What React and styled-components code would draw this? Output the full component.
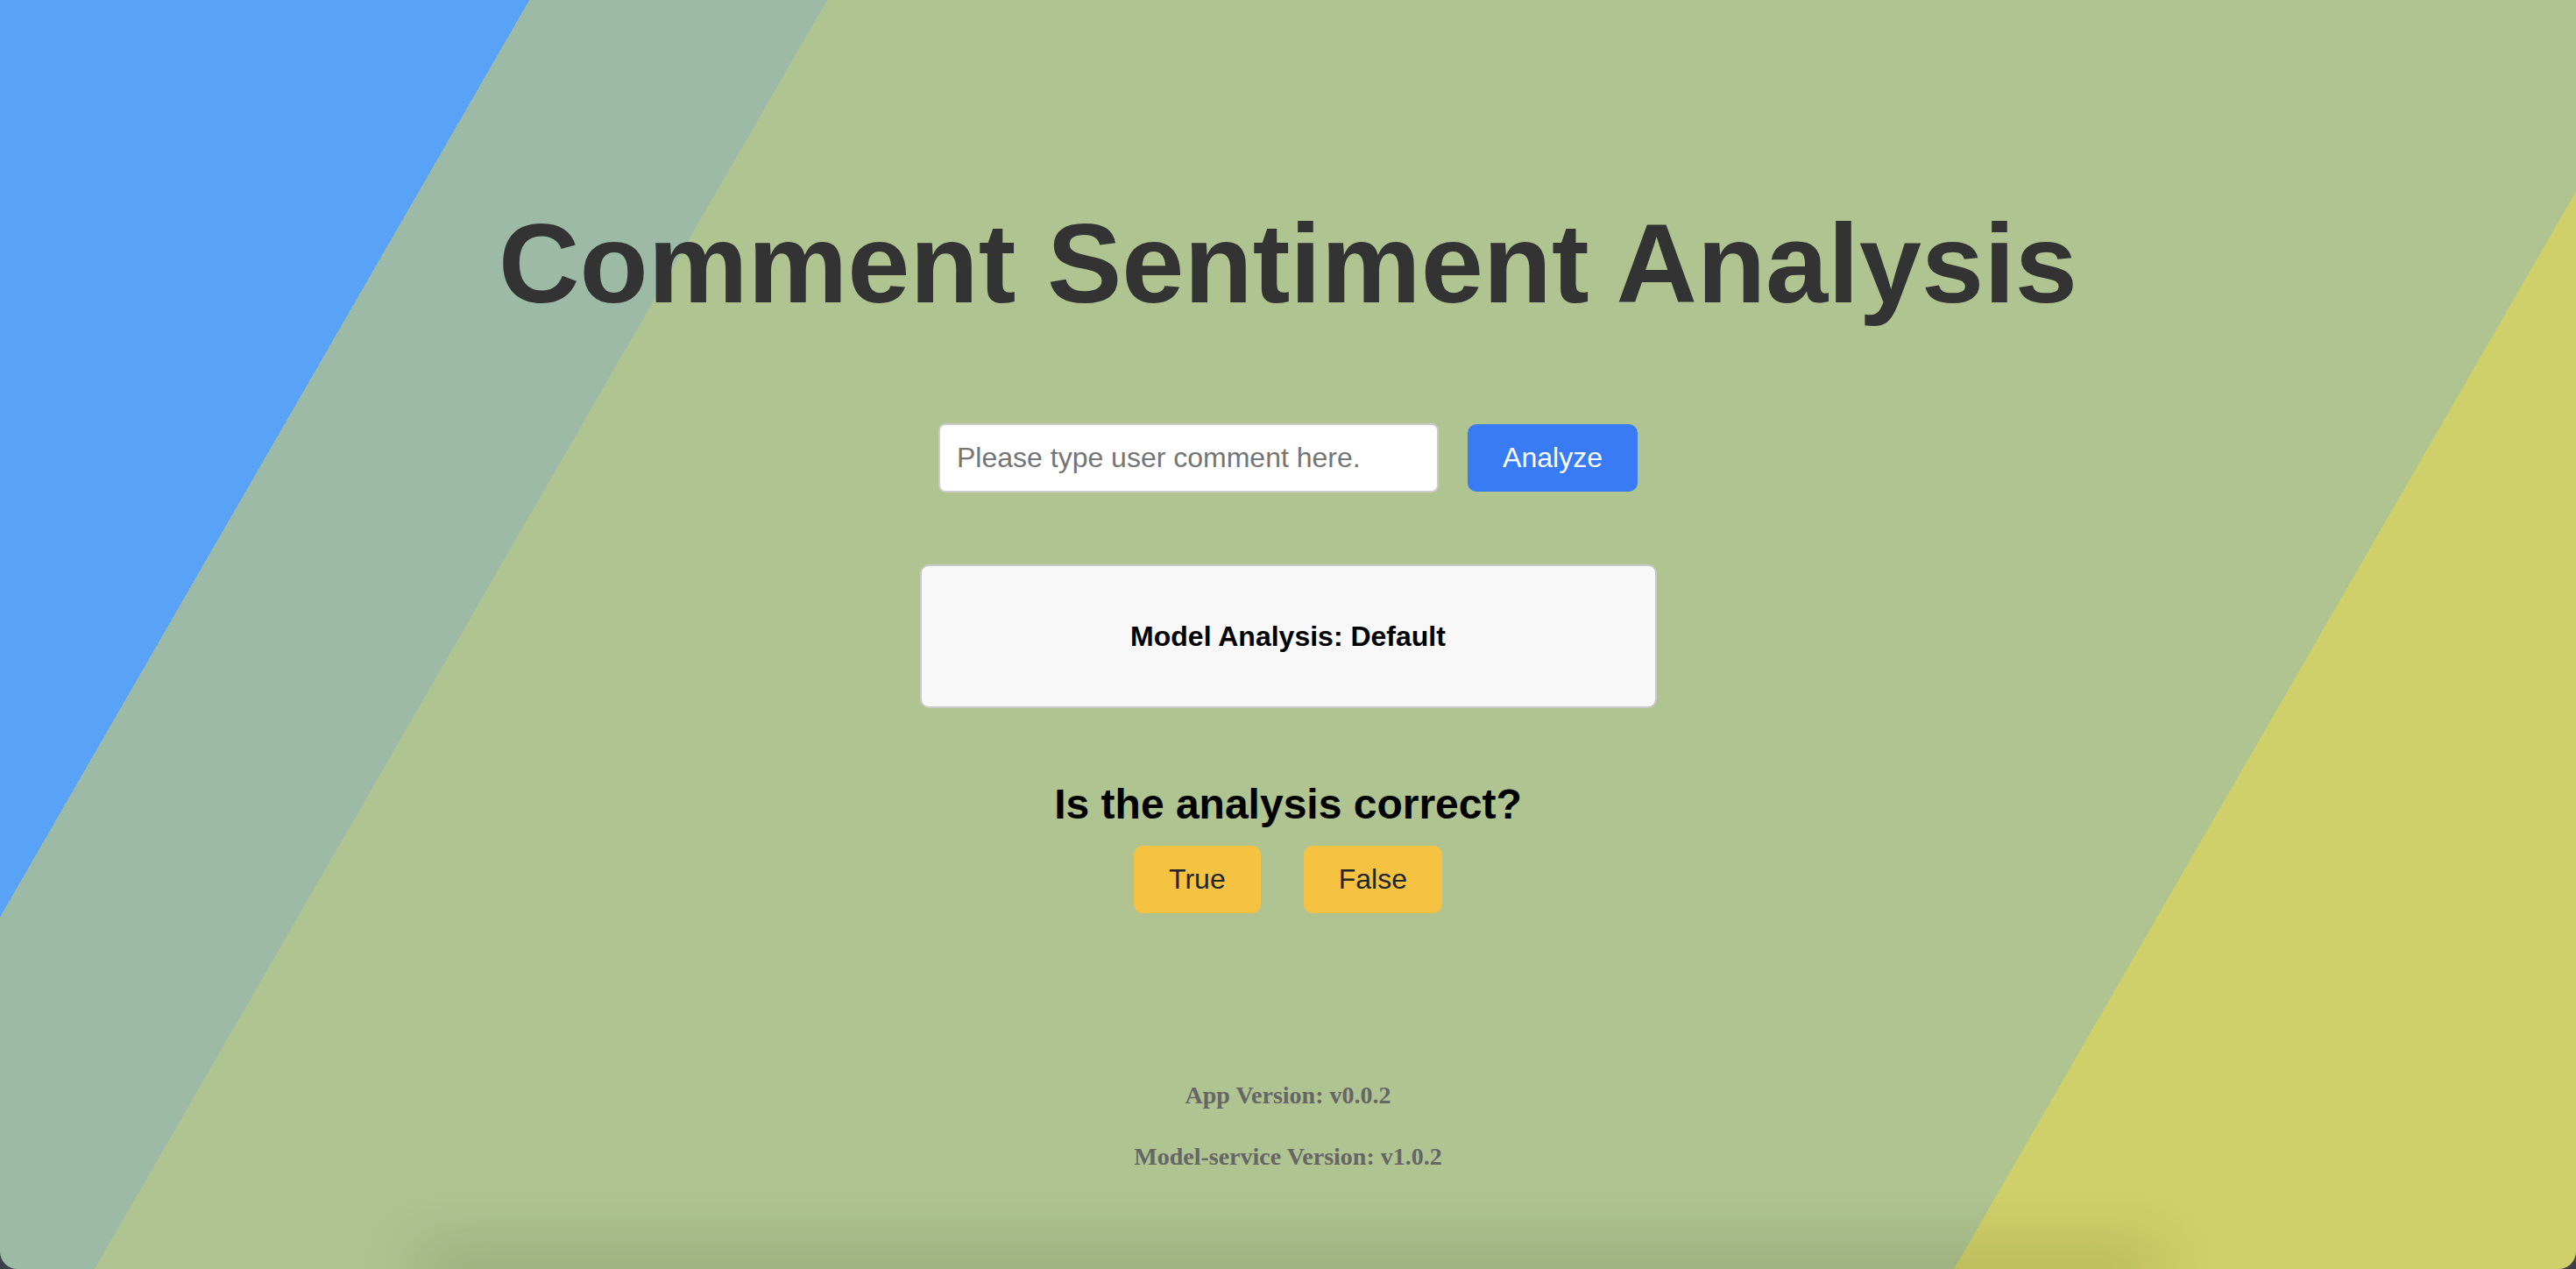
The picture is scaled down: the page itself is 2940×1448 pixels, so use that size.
import React, { useState } from "react";
import styled, { createGlobalStyle } from "styled-components";

const Global = createGlobalStyle`
  html, body {
    margin: 0;
    padding: 0;
    background: #3b4049;
  }
`;

const Window = styled.div`
  min-height: 100vh;
  box-sizing: border-box;
  display: flex;
  flex-direction: column;
  align-items: center;
  overflow: hidden;
  border-radius: 0 0 20px 20px;
  font-family: "Liberation Sans", Arial, sans-serif;
  background: linear-gradient(
    120deg,
    #58a2f7 0 16%,
    #9dbaa6 16% 25%,
    #afc491 25% 81.2%,
    #d0d06a 81.2% 100%
  );
`;

const Titulo = styled.h1`
  margin: 229px 0 0;
  font-size: 128px;
  line-height: 143px;
  font-weight: bold;
  color: #333;
`;

const Linha = styled.div`
  display: flex;
  align-items: center;
  gap: ${(p) => p.gap || 0}px;
  margin-top: ${(p) => p.top || 0}px;
`;

const Campo = styled.input`
  width: 571px;
  height: 79px;
  box-sizing: border-box;
  padding: 0 19px;
  border: 2px solid #cbcbcb;
  border-radius: 8px;
  background: #fff;
  font-family: "Liberation Sans", Arial, sans-serif;
  font-size: 32px;
  color: #222;
  outline: none;
  &::placeholder {
    color: #757575;
  }
`;

const BotaoAzul = styled.button`
  width: 194px;
  height: 77px;
  border: none;
  border-radius: 10px;
  background: #387bf5;
  color: #fff;
  font-family: "Liberation Sans", Arial, sans-serif;
  font-size: 32px;
`;

const Caixinha = styled.div`
  width: 841px;
  height: 164px;
  box-sizing: border-box;
  margin-top: 82px;
  display: flex;
  align-items: center;
  justify-content: center;
  background: #f8f8f8;
  border: 2px solid #c9c9c9;
  border-radius: 10px;
  font-size: 32px;
  font-weight: bold;
  color: #000;
`;

const Pergunta = styled.h2`
  margin: 83px 0 0;
  font-size: 48px;
  line-height: 54px;
  font-weight: bold;
  color: #000;
`;

const BotaoAmarelo = styled.button`
  height: 77px;
  padding: 0 40px;
  border: none;
  border-radius: 10px;
  background: #f5c242;
  color: #222529;
  font-family: "Liberation Sans", Arial, sans-serif;
  font-size: 32px;
`;

const Versao = styled.h5`
  margin: ${(p) => p.top}px 0 0;
  font-family: "Liberation Serif", "Times New Roman", serif;
  font-size: 28px;
  line-height: 32px;
  font-weight: bold;
  color: #666;
`;

const Sombra = styled.div`
  margin-top: auto;
  width: 1950px;
  height: 0;
  box-shadow: 0 0 70px 20px rgba(30, 40, 10, 0.22);
`;

export default function App() {
  const [comentario, setComentario] = useState("");

  return (
    <Window>
      <Global />
      <Titulo>Comment Sentiment Analysis</Titulo>
      <Linha top={111} gap={33}>
        <Campo
          placeholder="Please type user comment here."
          value={comentario}
          onChange={(e) => setComentario(e.target.value)}
        />
        <BotaoAzul>Analyze</BotaoAzul>
      </Linha>
      <Caixinha>Model Analysis: Default</Caixinha>
      <Pergunta>Is the analysis correct?</Pergunta>
      <Linha top={20} gap={49}>
        <BotaoAmarelo>True</BotaoAmarelo>
        <BotaoAmarelo>False</BotaoAmarelo>
      </Linha>
      <Versao top={192}>App Version: v0.0.2</Versao>
      <Versao top={38}>Model-service Version: v1.0.2</Versao>
      <Sombra />
    </Window>
  );
}
